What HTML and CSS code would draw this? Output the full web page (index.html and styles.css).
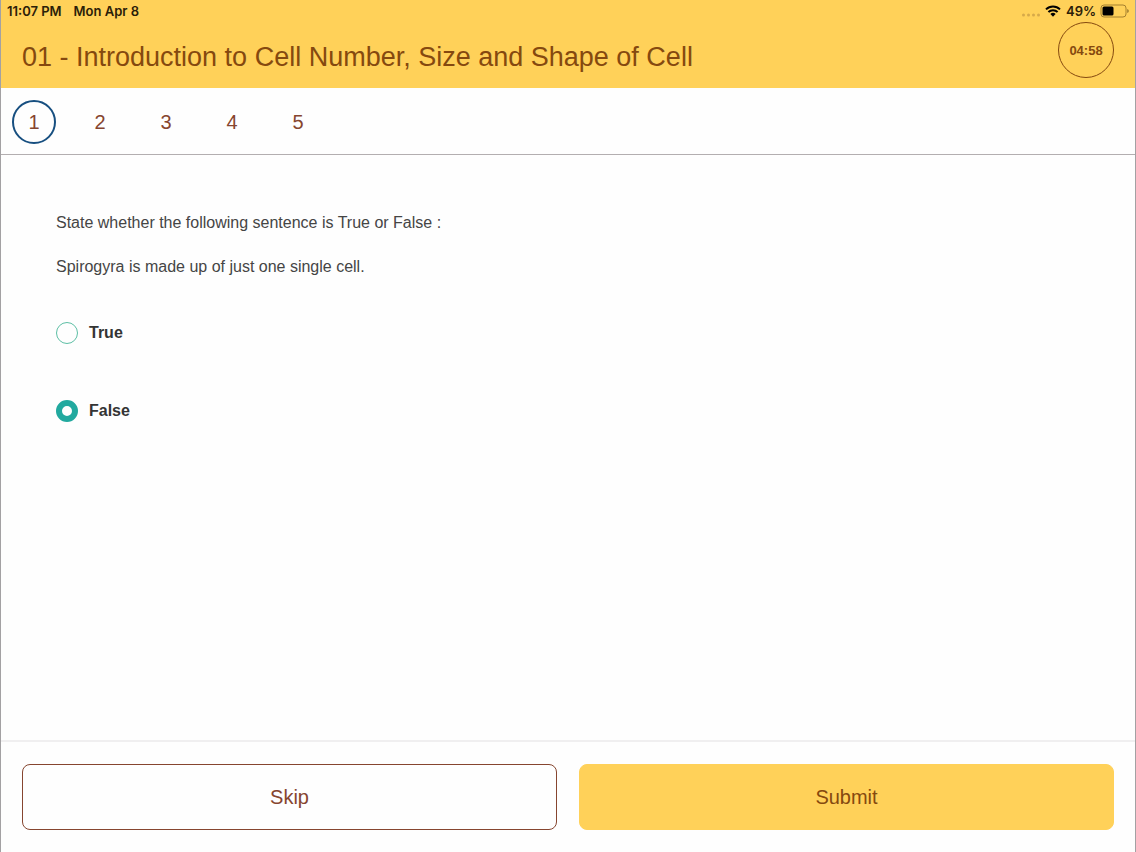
FILE: index.html
```html
<!DOCTYPE html>
<html lang="en">
<head>
  <meta charset="UTF-8" />
  <meta name="viewport" content="width=device-width, initial-scale=1.0"/>
  <title>Introduction to Cell Number, Size and Shape of Cell</title>
  <link rel="stylesheet" href="styles.css">
</head>
<body>

<header class="header">
  <div class="status-bar">
    <span>11:07 PM</span>
    <span class="date">Mon Apr 8</span>
    <svg class="signal" width="20" height="6" viewBox="0 0 20 6" aria-hidden="true">
      <circle cx="2.5" cy="3" r="1.5"/><circle cx="7.5" cy="3" r="1.5"/><circle cx="12.5" cy="3" r="1.5"/><circle cx="17.5" cy="3" r="1.5"/>
    </svg>
    <svg class="wifi" width="16" height="12" viewBox="0 0 16 12" aria-hidden="true">
      <path d="M1 4.4a10 10 0 0 1 14 0M3.4 7a6.6 6.6 0 0 1 9.2 0" fill="none" stroke="#000" stroke-width="2"/>
      <path d="M8 11.8 5.4 9.1a3.7 3.7 0 0 1 5.2 0z"/>
    </svg>
    <span class="percent">49%</span>
    <svg class="battery" width="29" height="14" viewBox="0 0 29 14" aria-hidden="true">
      <rect x="1" y="1" width="25" height="12" rx="3" fill="none" stroke="#a5802f"/>
      <rect x="2.5" y="2.5" width="11" height="9" rx="1.5"/>
      <path d="M27.3 5v4q1.4-.6 1.4-2t-1.4-2z" fill="#8c6c26"/>
    </svg>
  </div>
  <div class="title-row">
    <h1>01 - Introduction to Cell Number, Size and Shape of Cell</h1>
    <div class="timer">04:58</div>
  </div>
</header>

<nav class="questions">
  <button type="button" class="active">1</button>
  <button type="button">2</button>
  <button type="button">3</button>
  <button type="button">4</button>
  <button type="button">5</button>
</nav>

<form class="quiz">
  <main class="question">
    <p>State whether the following sentence is True or False :</p>
    <p>Spirogyra is made up of just one single cell.</p>

    <div class="options">
      <div class="option">
        <input type="radio" name="answer" id="optTrue" value="true" />
        <label for="optTrue">True</label>
      </div>
      <div class="option">
        <input type="radio" name="answer" id="optFalse" value="false" checked />
        <label for="optFalse">False</label>
      </div>
    </div>
  </main>

  <footer class="actions">
    <button type="button" class="skip">Skip</button>
    <button type="submit" class="submit">Submit</button>
  </footer>
</form>

</body>
</html>
```

FILE: styles.css
```css
* {
  box-sizing: border-box;
}
body {
  margin: 0;
  min-height: 100vh;
  display: flex;
  flex-direction: column;
  background: #fefefe;
  color: #454545;
  font-family: "Liberation Sans", Arial, sans-serif;
  font-size: 16px;
  border-left: 1px solid #a3a1a3;
  border-right: 1px solid #a3a1a3;
}
button {
  font-family: inherit;
  font-size: 20px;
  color: #86452f;
  background: none;
  border: none;
  padding: 0;
  cursor: pointer;
}

/* header */
.header {
  background: #ffd159;
  margin: 0 -1px;
  border-left: 1px solid #c99a3c;
  border-right: 1px solid #e0b54c;
}
.status-bar {
  display: flex;
  align-items: center;
  height: 22px;
  padding: 0 6px;
  font-family: Inter, "Liberation Sans", sans-serif;
  font-size: 13px;
  font-weight: 600;
  color: #2b2008;
}
.date {
  margin-left: 12px;
}
.signal {
  margin-left: auto;
  margin-top: 8px;
  fill: #d6a94a;
}
.wifi {
  margin-left: 4px;
}
.percent {
  margin: 0 4px 0 5px;
}
.title-row {
  display: flex;
  justify-content: space-between;
  align-items: flex-start;
  height: 66px;
  padding: 0 21px;
}
h1 {
  margin: 0;
  font-size: 27px;
  font-weight: normal;
  line-height: 70px;
  color: #85490f;
}
.timer {
  width: 56px;
  height: 56px;
  border: 1px solid #85490f;
  border-radius: 50%;
  font-size: 13px;
  font-weight: bold;
  line-height: 56px;
  text-align: center;
  color: #85490f;
}

/* question numbers */
.questions {
  display: flex;
  gap: 22px;
  padding: 12px 11px 10px;
  border-bottom: 1px solid #b3aeb0;
}
.questions button {
  width: 44px;
  height: 44px;
  border-radius: 50%;
}
.questions .active {
  border: 2px solid #174f80;
}

/* question */
.quiz {
  flex: 1;
  display: flex;
  flex-direction: column;
}
.question {
  flex: 1;
  padding: 57px 55px;
}
.question p {
  margin: 0 0 22px;
  line-height: 22px;
}
.options {
  display: flex;
  flex-direction: column;
  gap: 56px;
  margin-top: 44px;
}
.option {
  display: flex;
  align-items: center;
  gap: 11px;
  height: 22px;
  font-weight: bold;
  color: #343434;
}
.option input {
  appearance: none;
  width: 22px;
  height: 22px;
  margin: 0;
  border: 1px solid #5dbfa5;
  border-radius: 50%;
}
.option input:checked {
  border: 6px solid #22a99f;
}

/* bottom buttons */
.actions {
  display: flex;
  gap: 22px;
  padding: 22px 21px;
  border-top: 2px solid #f0eff0;
}
.actions button {
  flex: 1;
  height: 66px;
  border: 1px solid #86452f;
  border-radius: 8px;
}
.actions .submit {
  background: #ffd159;
  border-color: #ffd159;
  color: #85490f;
}
```
